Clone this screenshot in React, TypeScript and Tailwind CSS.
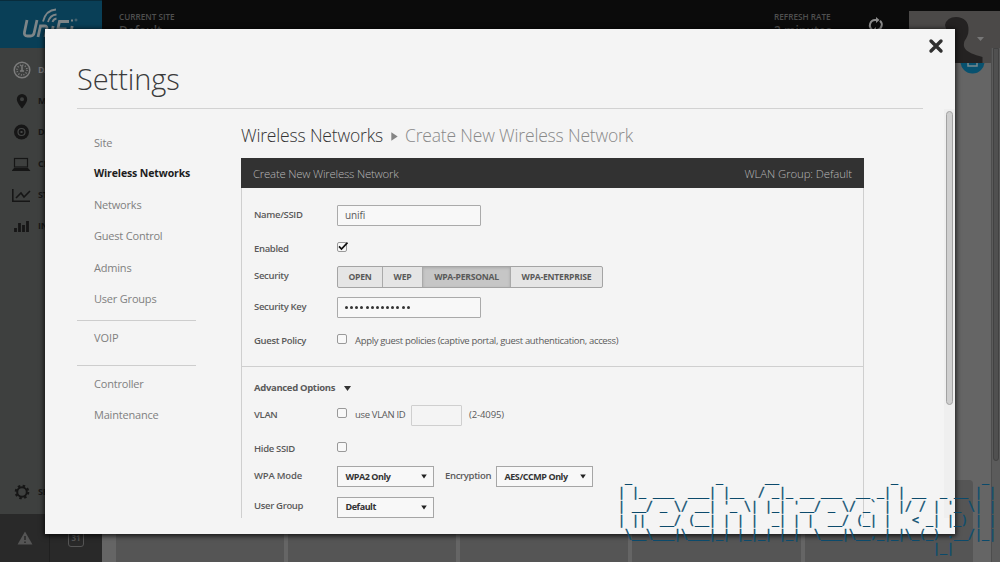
import React from "react";

const font = "font-['Open_Sans','Noto_Sans',sans-serif]";

const banner = [
  " _            _      __                _            _ ",
  "| |_ ___  ___| |__  / _|_ __ ___  __ _| | __  _ __ | |",
  "| __/ _ \\/ __| '_ \\| |_| '__/ _ \\/ _` | |/ / | '_ \\| |",
  "| ||  __/ (__| | | |  _| | |  __/ (_| |   < _| |_) | |",
  " \\__\\___|\\___|_| |_|_| |_|  \\___|\\__,_|_|\\_(_) .__/|_|",
  "                                             |_|      ",
].join("\n");

function NavIcon({ name }: { name: string }) {
  return (
    <svg width="20" height="20" viewBox="0 0 20 20" fill="none" className="shrink-0 text-[#161616]">
      {name === "dash" && (
        <g stroke="#7c7c7c" strokeWidth="1.5">
          <circle cx="10" cy="10" r="7.8" />
          <circle cx="10" cy="10" r="5" strokeWidth="1.6" strokeDasharray="1 1.6" />
          <path d="M10 5v6M8 11h4" />
        </g>
      )}
      {name === "map" && (
        <path fill="currentColor" fillRule="evenodd" d="M10 3a5.2 5.2 0 0 0-5.2 5.2C4.8 12 10 17.5 10 17.5s5.2-5.5 5.2-9.3A5.2 5.2 0 0 0 10 3zm0 3.2a2 2 0 1 1 0 4 2 2 0 0 1 0-4z" />
      )}
      {name === "dev" && (
        <g>
          <circle cx="9.5" cy="10" r="7.5" fill="currentColor" />
          <circle cx="9.5" cy="10" r="3.5" stroke="#454746" strokeWidth="1.2" />
          <rect x="8.5" y="9" width="2" height="2" fill="#454746" />
        </g>
      )}
      {name === "cli" && (
        <g>
          <rect x="2.5" y="4.5" width="13" height="8.5" stroke="currentColor" strokeWidth="1.2" />
          <path d="M2 14h14l2.5 3H-.5z" fill="currentColor" />
        </g>
      )}
      {name === "stat" && <path d="M.8 4v12.2H18M4 13l5-5 3 4 6-6" stroke="currentColor" strokeWidth="1.6" />}
      {name === "ins" && <path d="M3.5 16v-4M7.5 16V7M11.5 16V9M15.5 16V5" stroke="currentColor" strokeWidth="2.8" />}
      {name === "set" && (
        <g stroke="currentColor">
          <circle cx="10" cy="10" r="4.8" strokeWidth="2" />
          <circle cx="10" cy="10" r="6.3" strokeWidth="2" strokeDasharray="2.47 2.47" />
        </g>
      )}
    </svg>
  );
}

const nav = [
  ["dash", "DASHBOARD"],
  ["map", "MAP"],
  ["dev", "DEVICES"],
  ["cli", "CLIENTS"],
  ["stat", "STATISTICS"],
  ["ins", "INSIGHTS"],
];

function Backdrop() {
  return (
    <div className="flex h-full flex-col bg-[#656565]">
      <header className="flex h-[48px] shrink-0 bg-[#0b0b0b]">
        <div className="flex w-[102px] justify-center border-t border-[#082c3c] bg-[#093f57] pt-[7px]">
          <svg width="58" height="34" viewBox="0 0 58 34" fill="none" stroke="#7d8588" strokeWidth="2.8">
            <path d="M5 12 2.5 24q-.8 4 3 4h3q3 0 3.6-3L15 12M16 29l2.500-11h4q3 0 2.400 3L23 29M29 29l2.200-11M34 29l3.500-15.500H47M36.500 21h8M48 29l2.200-11" />
            <path d="M21 13.500Q24 2 34 1.500M26 14q2-7 8.500-7.500M30.500 14q1-3 4-3.500" strokeWidth="1.8" />
            <path d="M50 13.500v-2" strokeWidth="2" />
            <circle cx="54" cy="12" r="1" strokeWidth=".6" />
          </svg>
        </div>
        <div className="flex grow justify-between pt-[11px] pl-[17px] text-[8.2px] leading-[12px] font-semibold text-[#4f4f4f]">
          <div>
            <div>CURRENT SITE</div>
            <div className="pt-[1px] text-[12px] leading-[14px]">Default</div>
          </div>
          <div className="flex">
            <div className="w-[93px]">
              <div>REFRESH RATE</div>
              <div className="pt-[1px] text-[12px] leading-[14px]">2 minutes</div>
            </div>
            <svg width="18" height="18" viewBox="0 0 18 18" className="mt-[5px] mr-[24px]" fill="none" stroke="#8b8b8b" strokeWidth="2">
              <path d="M5 13.500A5.300 5.300 0 0 1 8 4h2M13 4.800A5.300 5.300 0 0 1 10 14H8" />
              <path d="m9 1 3.500 3L9 7zM9 11l-3.500 3L9 17z" fill="#8b8b8b" stroke="none" />
            </svg>
          </div>
        </div>
        <div className="mt-[11px] h-[52px] w-[91px] shrink-0 bg-[#4b4948]">
          <svg width="91" height="52" viewBox="0 0 91 52">
            <path d="M47 6c8 0 13 5 12.500 13 0 5-2 8-4 11-2 7 0 11 18 16v6H46L36 14q2-8 11-8z" fill="#242222" />
            <path d="M68 26h7l-3.500 4z" fill="#777" />
          </svg>
        </div>
      </header>
      <div className="flex min-h-0 grow">
        <aside className="flex w-[102px] shrink-0 flex-col bg-[#3e403f]">
          <div className="flex grow flex-col pt-[6px]">
            {nav.map(([icon, label]) => (
              <div key={icon} className="flex h-[31.3px] items-center gap-[6px] pl-[12px] text-[9px] font-bold tracking-[-0.3px] text-[#171717]">
                <NavIcon name={icon} />
                <span className={icon === "dash" ? "w-[7px] overflow-hidden text-[#777]" : ""}>{label}</span>
              </div>
            ))}
          </div>
          <div className="flex h-[44px] items-center gap-[6px] pb-[1px] pl-[12px] text-[9px] font-bold tracking-[-0.3px] text-[#171717]">
            <NavIcon name="set" />
            SETTINGS
          </div>
          <div className="flex h-[48px] shrink-0 bg-[#292929]">
            <div className="flex w-[50px] justify-center border-r border-[#202020] pt-[17px]">
              <svg width="16" height="14" viewBox="0 0 16 14">
                <path d="m8 .5 7.500 13H.5z" fill="#555" />
                <path d="M8 5v4M8 10.500V12" stroke="#292929" strokeWidth="1.5" />
              </svg>
            </div>
            <div className="flex grow justify-center pt-[16px]">
              <div className="h-[17px] w-[16px] rounded-[3px] border border-[#555] text-center text-[8px] leading-[14px] font-bold text-[#555]">31</div>
            </div>
          </div>
        </aside>
        <main className="flex grow items-end justify-between">
          <div className="flex h-[82px] grow gap-[4px] pl-[14px]">
            <div className="w-[168px] bg-[#555]" />
            <div className="w-[168px] bg-[#555]" />
            <div className="w-[168px] bg-[#555]" />
            <div className="w-[169px] bg-[#555]" />
            <div className="grow rounded-tr-[4px] bg-[#555]" />
          </div>
          <div className="ml-[18px] flex h-full w-[9px] shrink-0 justify-center border-l border-[#4d4d4d] bg-[#5b5b5b]">
            <div className="h-[413px] w-[6px] rounded-b-[3px] border border-[#424242] bg-[#505050]" />
          </div>
        </main>
      </div>
      <div className="absolute top-[63px] left-[960px] h-[11px] w-[25px] overflow-hidden">
        <svg width="25" height="25" viewBox="0 0 25 25" className="-mt-[14px]">
          <circle cx="12.5" cy="12.5" r="12" fill="#07516f" />
          <path d="M8 12v5h9v-5" stroke="#79898f" strokeWidth="1.5" fill="none" />
        </svg>
      </div>
    </div>
  );
}

function Row({ label, h, labelClass = "", children }: { label: string; h: string; labelClass?: string; children?: React.ReactNode }) {
  return (
    <div className={`flex items-center ${h}`}>
      <div className={`w-[83px] shrink-0 whitespace-nowrap ${labelClass}`}>{label}</div>
      {children}
    </div>
  );
}

function Check({ on = false, className = "" }: { on?: boolean; className?: string }) {
  return (
    <div className={`h-[10px] w-[10px] shrink-0 rounded-[2px] border border-[#999] bg-[#f8f8f8] ${className}`}>
      {on && (
        <svg width="11" height="9" viewBox="0 0 11 9" className="-mt-[1px]" fill="none">
          <path d="M1 4.300 3.500 7 9.500.7" stroke="#111" strokeWidth="1.7" />
        </svg>
      )}
    </div>
  );
}

function Select({ value }: { value: string }) {
  return (
    <div className="flex h-[21px] w-[97px] shrink-0 items-center justify-between border border-[#a6a6a6] bg-[#f8f8f8] pr-[6px] pl-[7.5px] text-[9px] font-bold tracking-[-0.44px] whitespace-nowrap text-[#333]">
      <span>{value}</span>
      <svg width="6" height="5" viewBox="0 0 6 5">
        <path d="M.2.5h5.600L3 4.600z" fill="#222" />
      </svg>
    </div>
  );
}

function SideItem({ children, active = false }: { children: string; active?: boolean }) {
  return (
    <div className={`flex h-[31.2px] items-center pl-[17px] whitespace-nowrap ${active ? "text-[10.5px] font-bold tracking-[-0.12px] text-[#1d1d1d]" : "pt-[1px] text-[11px] tracking-[-0.2px] text-[#808080]"}`}>
      {children}
    </div>
  );
}

function Modal() {
  return (
    <div className="absolute top-[29px] left-[45px] flex h-[505px] w-[910px] flex-col bg-[#f4f4f4] shadow-[0_1px_5px_1px_rgba(0,0,0,0.75)]">
      <div className="flex h-[80px] shrink-0 justify-between">
        <div className="ml-[32px] flex h-[80px] w-[846px] items-center border-b border-[#d2d2d2] pt-[19px] text-[29px] leading-none font-light tracking-[-0.1px] text-[#3b3b3b]">
          Settings
        </div>
        <svg width="16" height="16" viewBox="0 0 16 16" className="mt-[9px] mr-[11px]" stroke="#303030" strokeWidth="3.4" strokeLinecap="round">
          <path d="m3 3 10 10M13 3 3 13" />
        </svg>
      </div>
      <div className="flex h-[409px] shrink-0 overflow-hidden">
        <nav className="ml-[32px] w-[119px] shrink-0 pt-[18px]">
          <SideItem>Site</SideItem>
          <SideItem active>Wireless Networks</SideItem>
          <SideItem>Networks</SideItem>
          <SideItem>Guest Control</SideItem>
          <SideItem>Admins</SideItem>
          <SideItem>User Groups</SideItem>
          <div className="mt-[6px] flex h-[46px] items-center border-y border-[#cdcdcd] pb-[9px] pl-[17px] text-[11px] tracking-[-0.1px] text-[#808080]">VOIP</div>
          <div className="pt-[2px]">
            <SideItem>Controller</SideItem>
            <SideItem>Maintenance</SideItem>
          </div>
        </nav>
        <section className="ml-[45px] w-[623px] shrink-0">
          <div className="flex h-[49px] items-center text-[17.5px] leading-none font-light tracking-[-0.17px] whitespace-nowrap text-[#333]">
            <span className="pt-[4px]">Wireless Networks</span>
            <svg width="7" height="9" viewBox="0 0 7 9" className="mt-[6px] mr-[7px] ml-[8px]">
              <path d="M.3.2 6.700 4.500.3 8.800z" fill="#858585" />
            </svg>
            <span className="pt-[4px] text-[#898989]">Create New Wireless Network</span>
          </div>
          <div className="flex h-[30px] items-center justify-between bg-[#323232] px-[12px] pt-[2px] text-[11.4px] font-light tracking-[-0.22px] text-[#b8b8b8]">
            <span>Create New Wireless Network</span>
            <span className="tracking-[-0.1px]">WLAN Group: Default</span>
          </div>
          <div className="border-x border-[#cfcfcf] text-[9.5px] font-semibold tracking-[-0.33px] text-[#5a5a5a]">
            <div className="h-[179px] border-b border-[#cfcfcf] pt-[9px] pl-[12px]">
              <Row label="Name/SSID" h="h-[36px]">
                <div className="flex h-[21px] w-[144px] items-center rounded-[1px] border border-[#aaa] bg-[#f8f8f8] pl-[7px] text-[10px] font-normal tracking-[-0.1px]">unifi</div>
              </Row>
              <Row label="Enabled" h="h-[31px]" labelClass="pt-[2px]">
                <Check on className="mb-[4px]" />
              </Row>
              <Row label="Security" h="h-[27px]" labelClass="pb-[2px]">
                <div className="mb-[1px] flex h-[22px] w-[266px] shrink-0 rounded-[2px] border border-[#a4a4a4] bg-[#e5e5e5] text-[8.6px] leading-[20px] font-bold tracking-[-0.24px] whitespace-nowrap text-[#5a5a5a]">
                  <div className="w-[45px] border-r border-[#aaa] text-center">OPEN</div>
                  <div className="w-[40px] border-r border-[#aaa] text-center">WEP</div>
                  <div className="w-[88px] border-r border-[#aaa] bg-[#c6c6c6] text-center shadow-[inset_0_1px_3px_rgba(0,0,0,0.15)]">WPA-PERSONAL</div>
                  <div className="grow text-center">WPA-ENTERPRISE</div>
                </div>
              </Row>
              <Row label="Security Key" h="h-[33px]">
                <div className="flex h-[21px] w-[144px] items-center gap-[2.15px] rounded-[1px] border border-[#aaa] bg-[#f8f8f8] pl-[7px]">
                  {Array.from({ length: 13 }, (_, i) => (
                    <span key={i} className="h-[3px] w-[3px] rounded-full bg-[#333]" />
                  ))}
                </div>
              </Row>
              <Row label="Guest Policy" h="h-[34px]">
                <Check className="mb-[4px]" />
                <span className="ml-[8px] font-normal">Apply guest policies (captive portal, guest authentication, access)</span>
              </Row>
            </div>
            <div className="h-[160px] pt-[11px] pl-[12px]">
              <div className="flex h-[21px] items-center font-bold">
                Advanced Options
                <svg width="7" height="5" viewBox="0 0 7 5" className="ml-[9px]">
                  <path d="M0 0h7L3.500 5z" fill="#333" />
                </svg>
              </div>
              <Row label="VLAN" h="h-[33px]">
                <Check className="mb-[5px]" />
                <span className="ml-[8px] w-[56px] font-normal whitespace-nowrap">use VLAN ID</span>
                <div className="h-[21px] w-[51px] rounded-[1px] border border-[#cfcfcf]" />
                <span className="ml-[7px] font-normal tracking-[-0.1px]">(2-4095)</span>
              </Row>
              <Row label="Hide SSID" h="h-[34px]">
                <Check className="mb-[4px]" />
              </Row>
              <Row label="WPA Mode" h="h-[21px]" labelClass="pb-[1px] tracking-[-0.2px]">
                <Select value="WPA2 Only" />
                <span className="w-[62px] pb-[1px] pl-[11px]">Encryption</span>
                <Select value="AES/CCMP Only" />
              </Row>
              <Row label="User Group" h="h-[40px]" labelClass="pb-[1px]">
                <Select value="Default" />
              </Row>
            </div>
          </div>
        </section>
        <div className="ml-auto flex w-[11px] justify-center bg-[#efefef] pt-[2px]">
          <div className="h-[294px] w-[7px] rounded-[4px] border border-[#a2a2a2] bg-[#cfcfcf]" />
        </div>
      </div>
    </div>
  );
}

export default function App() {
  return (
    <div className={`relative h-[562px] w-[1000px] overflow-hidden ${font}`}>
      <Backdrop />
      <Modal />
      <pre className="absolute top-[471px] left-[618px] font-['DejaVu_Sans_Mono',monospace] text-[11.63px] leading-[14px] text-[#0b5274] [-webkit-text-stroke:0.4px_#0b4a6b]">{banner}</pre>
    </div>
  );
}
